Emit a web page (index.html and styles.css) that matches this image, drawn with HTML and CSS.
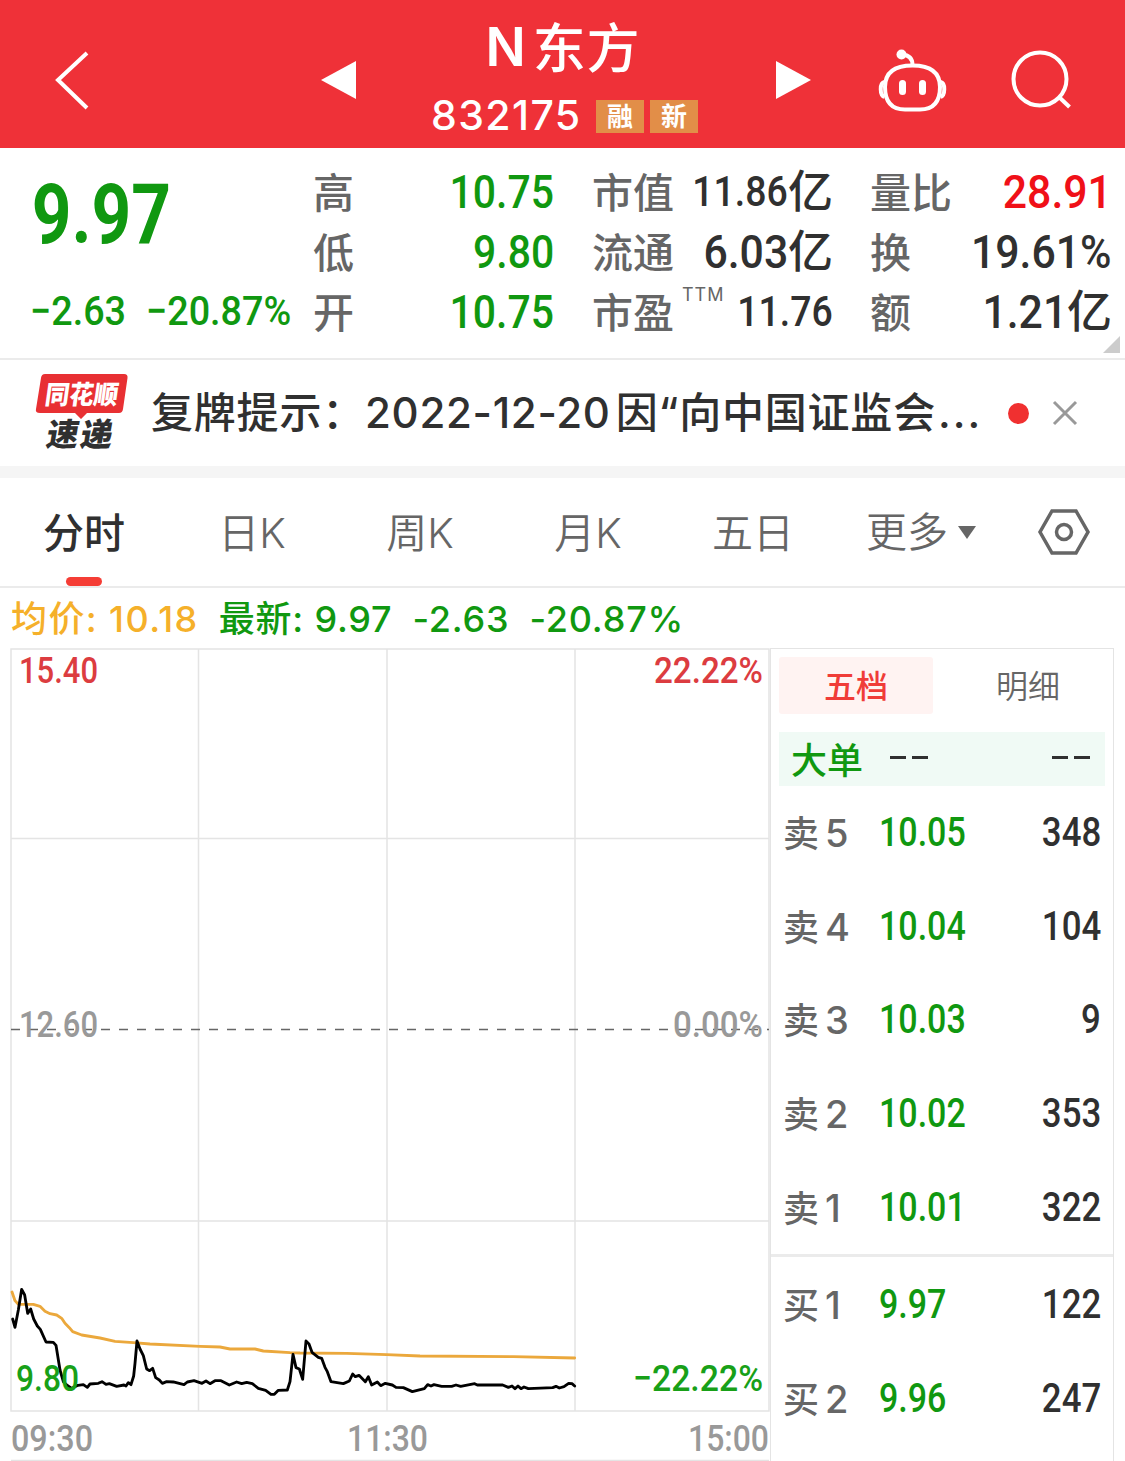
FILE: index.html
```html
<!DOCTYPE html>
<html lang="zh-CN">
<head>
  <meta charset="UTF-8">
  <meta name="viewport" content="width=device-width, initial-scale=1.0">
  <title>N东方 832175</title>
  <link rel="stylesheet" href="styles.css">
</head>
<body>

  <!-- Header -->
  <header class="header">
    <svg class="icon-back" viewBox="0 0 36 62"><path d="M33 4L4 31L33 59"/></svg>
    <svg class="icon-prev" viewBox="0 0 36 40"><path d="M0 20L35 1V39Z"/></svg>
    <div class="stock">
      <div class="stock-name"><span>N</span>东方</div>
      <div class="stock-code">
        <span class="code">832175</span>
        <span class="tag">融</span>
        <span class="tag">新</span>
      </div>
    </div>
    <svg class="icon-next" viewBox="0 0 36 40"><path d="M1 1L36 20L1 39Z"/></svg>
    <svg class="icon-robot" viewBox="0 0 70 64">
      <circle cx="23.500" cy="6.500" r="5" class="fill"/>
      <path d="M24 6.500C31 7 34.500 10 34.500 17"/>
      <path d="M34.500 17.500C50 17.500 62 23 62 39C62 54 55 61.500 42 61.500H27C14 61.500 7 54 7 39C7 23 19 17.500 34.500 17.500Z"/>
      <path d="M6.500 34C1.500 35 1.500 47 6.500 49M62.500 34C67.500 35 67.500 47 62.500 49"/>
      <rect x="21" y="32" width="7" height="15" rx="3.500" class="fill"/>
      <rect x="41" y="32" width="7" height="15" rx="3.500" class="fill"/>
    </svg>
    <svg class="icon-search" viewBox="0 0 60 60"><circle cx="28" cy="29" r="26.500"/><path d="M47 47L57.500 57"/></svg>
  </header>

  <!-- Quote -->
  <section class="quote">
    <div class="price-box">
      <div class="price num">9.97</div>
      <div class="change"><span class="num">−2.63</span><span class="num">−20.87%</span></div>
    </div>
    <div class="col col-a">
      <div class="row"><label>高</label><span class="num green">10.75</span></div>
      <div class="row"><label>低</label><span class="num green">9.80</span></div>
      <div class="row"><label>开</label><span class="num green">10.75</span></div>
    </div>
    <div class="col col-b">
      <div class="row"><label>市值</label><span class="val small"><span class="num">11.86</span>亿</span></div>
      <div class="row"><label>流通</label><span class="val"><span class="num">6.03</span>亿</span></div>
      <div class="row"><label>市盈<sup>TTM</sup></label><span class="val small"><span class="num">11.76</span></span></div>
    </div>
    <div class="col col-c">
      <div class="row"><label>量比</label><span class="num red">28.91</span></div>
      <div class="row"><label>换</label><span class="num">19.61%</span></div>
      <div class="row"><label>额</label><span class="val"><span class="num">1.21</span>亿</span></div>
    </div>
    <i class="corner"></i>
  </section>

  <!-- Notice -->
  <section class="notice">
    <svg class="logo" viewBox="0 0 94 80">
      <path class="bubble" d="M10 1H89Q93 1 92.500 5L88 36Q87.500 40 84 40H52L46 46L40 40H5Q0 40 1 36L6 5Q6.500 1 10 1Z"/>
      <text class="logo-top" x="0" y="0" transform="translate(9 31) skewX(-8)" textLength="73" lengthAdjust="spacingAndGlyphs">同花顺</text>
      <text class="logo-bottom" x="0" y="0" transform="translate(10 73) skewX(-10)" textLength="66">速递</text>
    </svg>
    <div class="notice-text">复牌提示：<span class="date">2022-12-20</span>因“向中国证监会<span class="dots">...</span></div>
    <i class="dot"></i>
    <svg class="close" viewBox="0 0 24 24"><path d="M1 1L23 23M23 1L1 23"/></svg>
  </section>

  <!-- Tabs -->
  <nav class="tabs">
    <a class="tab active">分时</a>
    <a class="tab">日K</a>
    <a class="tab">周K</a>
    <a class="tab">月K</a>
    <a class="tab tab-five">五日</a>
    <a class="tab tab-more">更多<svg viewBox="0 0 18 13"><path d="M0 0H18L9 13Z"/></svg></a>
    <svg class="icon-set" viewBox="0 0 52 46"><path d="M14 2H38L50 23L38 44H14L2 23Z"/><circle cx="26" cy="23" r="7.500"/></svg>
  </nav>

  <!-- Average / latest -->
  <div class="info">
    <span class="avg">均价: 10.18</span>
    <span class="latest">最新: 9.97</span>
    <span class="latest">-2.63</span>
    <span class="latest">-20.87%</span>
  </div>

  <main class="main">
    <!-- Minute chart -->
    <svg class="chart" viewBox="0 648 770 813">
      <g class="grid">
        <path d="M11 649H769V1411H11ZM198.500 649V1411M387 649V1411M575 649V1411M11 838.500H769M11 1221H769M11 1460.500H769"/>
      </g>
      <path class="zero" d="M11 1029.500H769"/>
      <g transform="translate(0 1270) scale(.33333)">
        <path class="line-avg" d="M36 66L45 92L55 103H100L120 109L135 124L150 131L170 135L185 145L195 160L208 173L218 185L245 195L300 204L345 214L400 218L450 222L600 229L660 231L690 237H765L790 243L870 248L900 249L1040 250L1160 254L1260 258L1540 260L1724 264"/>
        <path class="line-price" d="M38 147L45 172L55 120L65 58L74 75L83 130L92 117L101 147L112 168L121 178L138 216L160 217L168 226L180 300L190 335L200 345L215 355L234 346L250 344L262 352L270 342L295 340L306 335L318 343L328 341L350 349L372 345L378 348L385 338L393 344L401 318L405 280L411 213L420 237L430 257L440 297L449 302L458 295L467 323L478 330L487 340L500 335L520 336L552 344L562 336L582 332L606 340L618 333L630 341L645 332L663 332L688 345L710 336L725 341L740 337L757 341L775 355L797 361L813 373L823 373L835 361L862 360L870 335L879 253L888 293L898 297L908 328L918 213L927 222L936 247L955 262L965 265L975 292L982 305L993 335L1030 341L1048 333L1058 312L1066 320L1077 316L1096 335L1105 320L1115 345L1132 336L1142 347L1156 340L1177 345L1188 352L1210 353L1237 365L1273 356L1283 344L1293 348L1302 344L1325 349H1355L1368 345L1382 349L1424 341L1432 345H1508L1525 352L1536 348L1545 356L1554 348L1563 356L1572 351L1585 356L1658 353L1668 349L1678 354L1692 350L1706 340L1716 341L1724 348"/>
      </g>
      <g class="axis">
        <text class="up" x="19" y="683" textLength="79" lengthAdjust="spacingAndGlyphs">15.40</text>
        <text class="up" x="654" y="683" textLength="109" lengthAdjust="spacingAndGlyphs">22.22%</text>
        <text class="flat" x="19" y="1036.500" textLength="79" lengthAdjust="spacingAndGlyphs">12.60</text>
        <text class="flat" x="673" y="1036.500" textLength="90" lengthAdjust="spacingAndGlyphs">0.00%</text>
        <text class="down" x="16" y="1390.500" textLength="63" lengthAdjust="spacingAndGlyphs">9.80</text>
        <text class="down" x="633" y="1390.500" textLength="130" lengthAdjust="spacingAndGlyphs">−22.22%</text>
        <text class="flat" x="11" y="1450.500" textLength="82" lengthAdjust="spacingAndGlyphs">09:30</text>
        <text class="flat" x="347" y="1450.500" textLength="81" lengthAdjust="spacingAndGlyphs">11:30</text>
        <text class="flat" x="688" y="1450.500" textLength="81" lengthAdjust="spacingAndGlyphs">15:00</text>
      </g>
    </svg>

    <!-- Order book -->
    <aside class="book">
      <div class="book-tabs"><span class="on">五档</span><span>明细</span></div>
      <div class="big"><b>大单</b><span class="dash"><i></i><i></i></span><span class="dash"><i></i><i></i></span></div>
      <div class="sell">
        <div class="order"><span class="lv">卖<em>5</em></span><span class="num green">10.05</span><span class="num qty">348</span></div>
        <div class="order"><span class="lv">卖<em>4</em></span><span class="num green">10.04</span><span class="num qty">104</span></div>
        <div class="order"><span class="lv">卖<em>3</em></span><span class="num green">10.03</span><span class="num qty">9</span></div>
        <div class="order"><span class="lv">卖<em>2</em></span><span class="num green">10.02</span><span class="num qty">353</span></div>
        <div class="order"><span class="lv">卖<em>1</em></span><span class="num green">10.01</span><span class="num qty">322</span></div>
      </div>
      <div class="buy">
        <div class="order"><span class="lv">买<em>1</em></span><span class="num green">9.97</span><span class="num qty">122</span></div>
        <div class="order"><span class="lv">买<em>2</em></span><span class="num green">9.96</span><span class="num qty">247</span></div>
      </div>
    </aside>
  </main>

</body>
</html>
```
FILE: styles.css
```css
* {
  box-sizing: border-box;
}
body {
  margin: 0;
  width: 1125px;
  height: 1461px;
  overflow: hidden;
  background-color: #fff;
  color: #303030;
  font-family: Inter, "Noto Sans CJK SC", sans-serif;
}
svg {
  display: block;
  flex: none;
  fill: none;
  overflow: visible;
}
i, em {
  font-style: normal;
}
/* Narrow figures */
.num {
  display: inline-block;
  font-family: Roboto, sans-serif;
  font-weight: 500;
  transform: scaleX(0.87);
  transform-origin: right center;
  white-space: nowrap;
}
.green {
  color: #109810;
}
.red {
  color: #f01018;
}
/* Header */
.header {
  display: flex;
  align-items: center;
  height: 148px;
  padding: 12px 53px 0 54px;
  background-color: #ef3138;
  color: #fff;
}
.header svg {
  stroke: #fff;
  stroke-width: 4;
}
.header .icon-prev, .header .icon-next {
  width: 36px;
  height: 40px;
  fill: #fff;
  stroke: none;
}
.icon-back {
  width: 36px;
  height: 62px;
}
.icon-prev {
  margin-left: 231px;
}
.stock {
  width: 419px;
  height: 136px;
}
.stock-name {
  margin-top: 3px;
  height: 72px;
  line-height: 68px;
  padding-right: 6px;
  font-size: 53px;
  font-weight: 500;
  text-align: center;
  letter-spacing: 1px;
}
.stock-name span {
  position: relative;
  top: -2px;
  margin-right: 6px;
  font-weight: 600;
}
.stock-code {
  display: flex;
  align-items: center;
  height: 60px;
  padding-left: 74px;
  margin-top: -1px;
}
.code {
  width: 165px;
  font-size: 41px;
  font-weight: 500;
  line-height: 58px;
  letter-spacing: 1.4px;
  margin-top: -2px;
}
.tag {
  width: 48px;
  height: 33px;
  margin-right: 6px;
  background-color: #e28e48;
  font-size: 26px;
  font-weight: 700;
  line-height: 33px;
  text-align: center;
}
.icon-robot {
  width: 70px;
  height: 64px;
  margin-left: 67px;
}
.icon-robot .fill {
  fill: #fff;
  stroke: none;
}
.icon-search {
  width: 60px;
  height: 60px;
  margin-left: 64px;
}
/* Quote */
.quote {
  position: relative;
  display: flex;
  height: 212px;
  padding: 14px 13px 0 30px;
  border-bottom: 2px solid #ebebeb;
}
.price-box {
  width: 283px;
  color: #109810;
}
.price-box .num {
  transform-origin: left center;
}
.price {
  height: 104px;
  line-height: 106px;
  font-size: 83px;
}
.price.num {
  display: block;
  font-weight: 700;
  transform: scaleX(0.835);
  padding-left: 2px;
}
.change {
  display: flex;
  height: 90px;
  line-height: 90px;
  font-size: 41px;
}
.change .num {
  width: 116px;
  transform: scaleX(0.92);
}
.col-a {
  width: 241px;
  margin-right: 38px;
}
.col-b {
  width: 241px;
  margin-right: 37px;
}
.col-c {
  width: 242px;
}
.row {
  display: flex;
  justify-content: space-between;
  height: 60px;
  line-height: 59px;
  font-size: 47px;
}
.row label {
  position: relative;
  top: 2px;
  color: #666;
  font-size: 41px;
  font-weight: 500;
}
.row sup {
  position: absolute;
  top: -19px;
  left: 90px;
  font-size: 18px;
  font-weight: 400;
  letter-spacing: 1px;
}
.col-c .num {
  transform: scaleX(0.91);
}
.val {
  display: flex;
  font-size: 45px;
  font-weight: 500;
  white-space: nowrap;
}
.val .num {
  font-size: 47px;
  transform: scaleX(0.91);
}
.small .num {
  font-size: 43px;
  transform: scaleX(0.87);
}
.corner {
  position: absolute;
  right: 5px;
  bottom: 5px;
  border-left: 17px solid transparent;
  border-bottom: 17px solid #ccc;
}
/* Notice */
.notice {
  display: flex;
  align-items: center;
  height: 118px;
  padding: 0 47px 0 35px;
  border-bottom: 12px solid #f5f5f5;
}
.logo {
  width: 94px;
  height: 80px;
}
.bubble {
  fill: #e83033;
}
.logo-top {
  fill: #fff;
  font-size: 26px;
  font-weight: 900;
}
.logo-bottom {
  fill: #303030;
  font-size: 32px;
  font-weight: 900;
}
.notice-text {
  width: 843px;
  margin: -8px 0 0 22px;
  font-size: 42px;
  font-weight: 500;
  letter-spacing: 0.8px;
  white-space: nowrap;
}
.date {
  margin-right: 5px;
  letter-spacing: 0.7px;
}
.dots {
  margin-left: 2px;
  letter-spacing: 2px;
}
.dot {
  width: 21px;
  height: 21px;
  margin-left: 14px;
  border-radius: 50%;
  background-color: #f03030;
}
.close {
  width: 24px;
  height: 24px;
  margin-left: 24px;
  stroke: #999;
  stroke-width: 3;
}
/* Tabs */
.tabs {
  display: flex;
  height: 110px;
  border-bottom: 2px solid #ebebeb;
  color: #666;
  font-size: 41px;
  line-height: 111px;
}
.tab {
  position: relative;
  width: 168px;
  text-align: center;
  font-weight: 350;
}
.active {
  color: #303030;
  font-weight: 500;
}
.active::after {
  content: "";
  position: absolute;
  left: 66px;
  bottom: 0;
  width: 36px;
  height: 9px;
  border-radius: 5px;
  background-color: #f53d35;
}
.tab-five {
  width: 162px;
}
.tab-more {
  display: flex;
  align-items: center;
  width: 172px;
  padding-left: 32px;
}
.tab-more svg {
  width: 18px;
  height: 13px;
  margin-left: 10px;
  fill: #666;
}
.icon-set {
  width: 52px;
  height: 46px;
  margin: 31px 0 0 32px;
  stroke: #666;
  stroke-width: 3.5;
}
/* Average line */
.info {
  display: flex;
  gap: 20px;
  height: 60px;
  padding-left: 11px;
  font-size: 36px;
  font-weight: 500;
  line-height: 62px;
  letter-spacing: 0.8px;
}
.avg {
  color: #f5b02a;
  letter-spacing: 1.4px;
}
.latest {
  color: #109810;
}
/* Chart */
.main {
  display: flex;
}
.chart {
  width: 770px;
  height: 813px;
}
.grid {
  stroke: #e4e4e4;
  stroke-width: 1.5;
}
.zero {
  stroke: #666;
  stroke-width: 1.5;
  stroke-dasharray: 9 9;
}
.line-avg, .line-price {
  stroke-linejoin: round;
  stroke-linecap: round;
}
.line-avg {
  stroke: #eba83c;
  stroke-width: 8.5;
}
.line-price {
  stroke: #000;
  stroke-width: 8.5;
}
.axis {
  font-family: Roboto, sans-serif;
  font-size: 37px;
  font-weight: 500;
}
.up {
  fill: #dc3c40;
}
.flat {
  fill: #999;
}
.down {
  fill: #18a018;
}
/* Order book */
.book {
  width: 344px;
  height: 813px;
  border: 1.5px solid #e4e4e4;
  border-bottom: none;
}
.book-tabs {
  display: flex;
  height: 65px;
  padding: 8px 8px 0;
  color: #666;
  font-size: 32px;
  font-weight: 350;
  line-height: 60px;
  text-align: center;
}
.book-tabs span {
  width: 154px;
  height: 57px;
  border-radius: 3px;
}
.book-tabs span + span {
  margin-left: 18px;
}
.book-tabs .on {
  background-color: #fff3f2;
  color: #f03c38;
  font-weight: 500;
}
.big {
  display: flex;
  align-items: center;
  height: 54px;
  margin: 18px 8px 0;
  padding: 0 15px 0 12px;
  background-color: #f0faf5;
}
.big b {
  width: 99px;
  margin-top: -2px;
  color: #109810;
  font-size: 36px;
  font-weight: 500;
}
.dash {
  display: flex;
  gap: 6px;
  margin-bottom: 3px;
}
.dash + .dash {
  margin-left: auto;
}
.dash i {
  width: 16px;
  height: 3px;
  background-color: #303030;
}
.sell {
  height: 471px;
  border-bottom: 3px solid #ebebeb;
}
.buy {
  padding-top: 1px;
}
.order {
  display: flex;
  height: 93.7px;
  padding: 0 12px 0 12px;
  font-size: 40px;
  line-height: 94px;
}
.order .lv {
  width: 96px;
  color: #666;
  font-size: 36px;
  font-weight: 500;
}
.order .lv em {
  margin-left: 6px;
  font-size: 38px;
}
.order .green {
  transform: scaleX(0.85);
  transform-origin: left center;
}
.qty {
  margin-left: auto;
}
```
